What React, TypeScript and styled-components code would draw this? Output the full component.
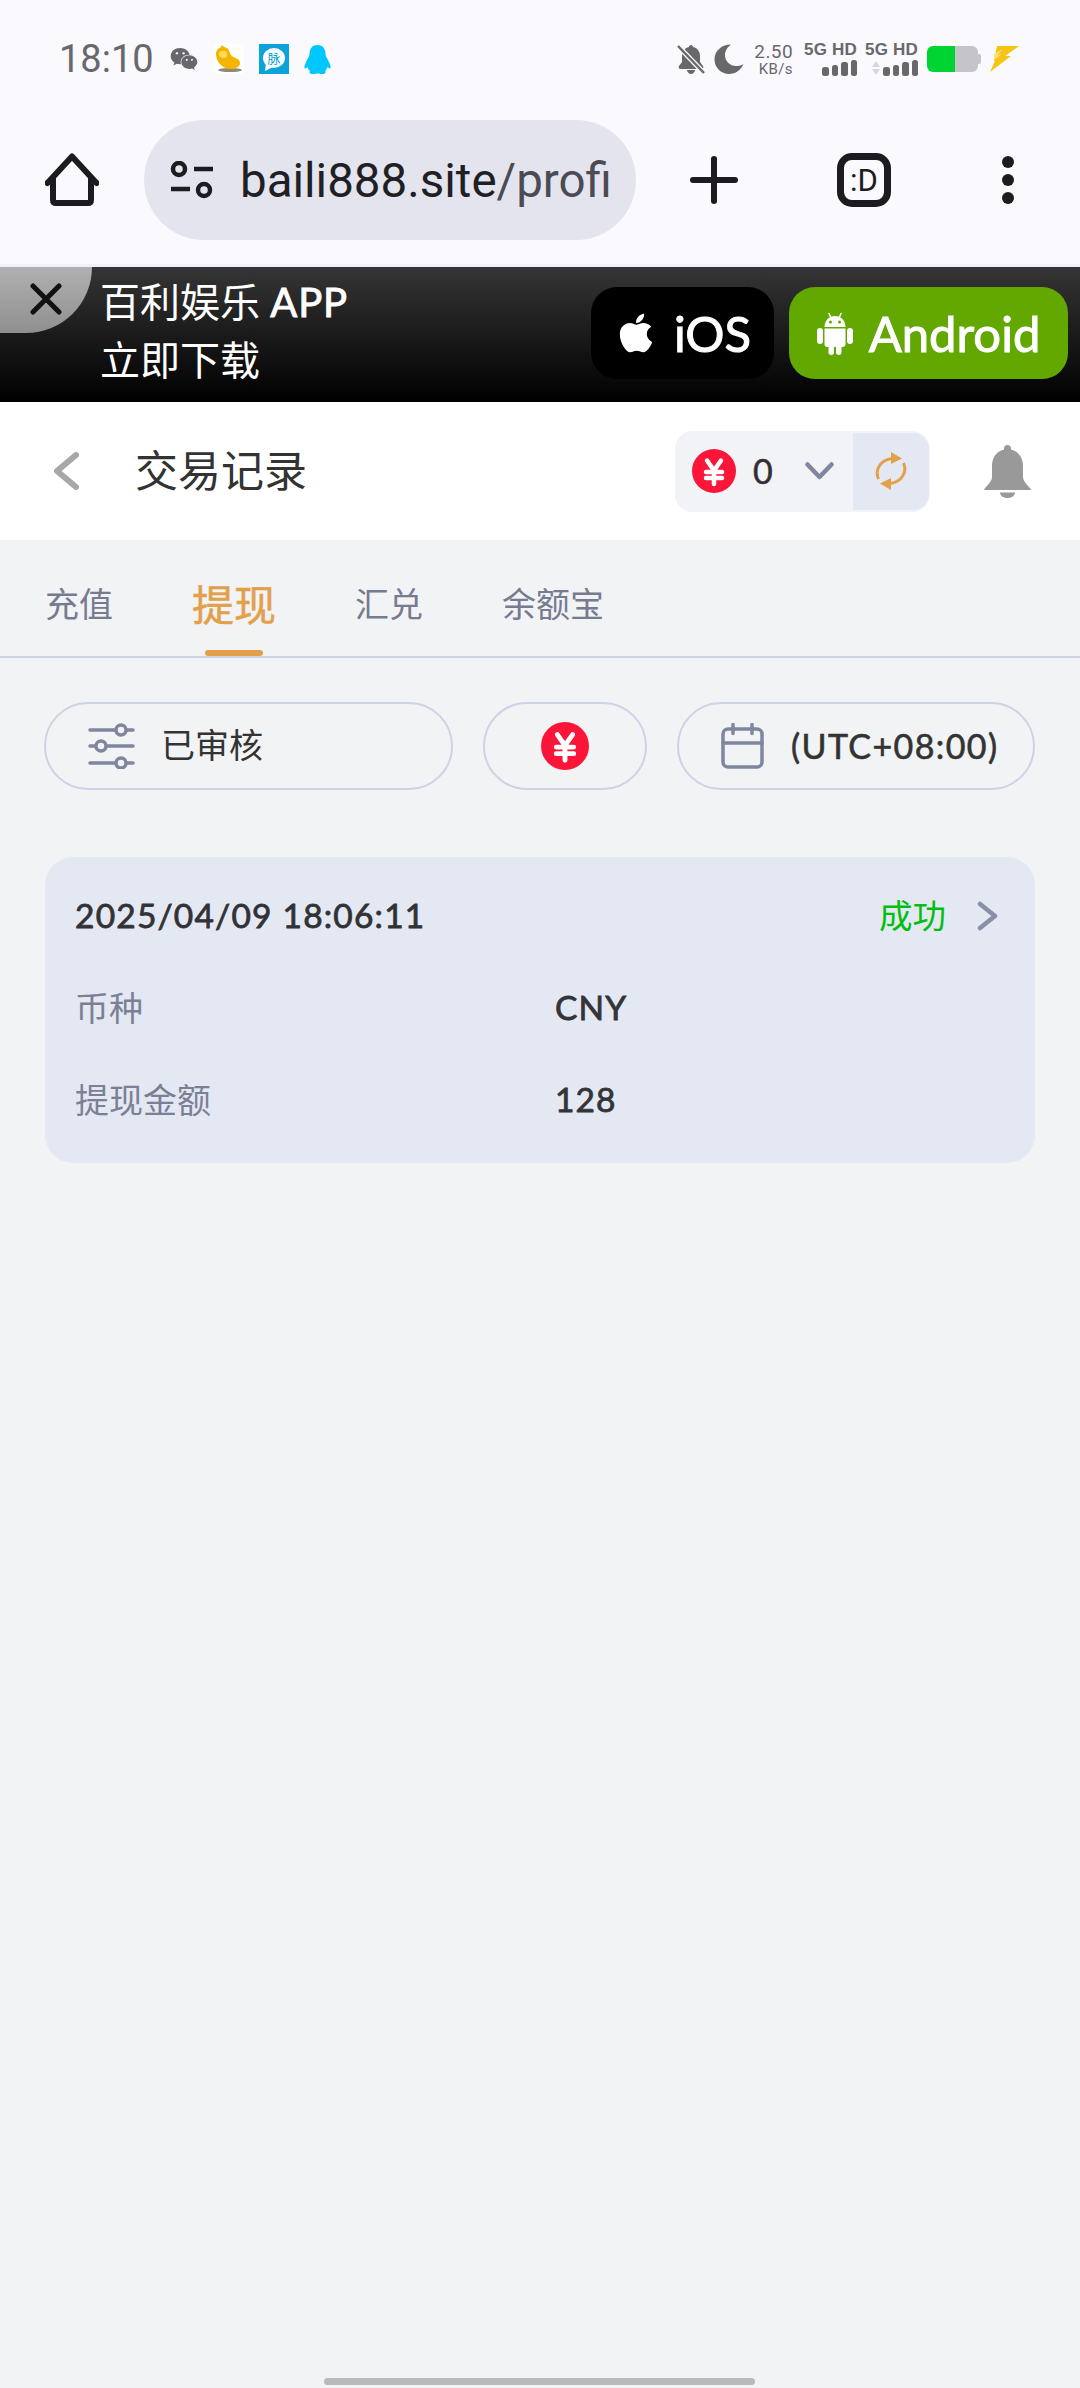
import React from "react";
import styled, { createGlobalStyle } from "styled-components";
import { FaApple, FaWeixin } from "react-icons/fa";

const SANS = `"Lato", "Noto Sans CJK SC", sans-serif`;
const CJK = `"Noto Sans CJK SC", "Noto Sans", sans-serif`;
const PAGE_BG = "#f2f3f5";

const Global = createGlobalStyle`
  html, body { margin: 0; padding: 0; background: ${PAGE_BG}; }
  * { box-sizing: border-box; }
`;

const Page = styled.div`
  width: 1080px;
  height: 2388px;
  display: flex;
  flex-direction: column;
  overflow: hidden;
  background: ${PAGE_BG};
  font-family: ${SANS};
`;

/* Phone status bar and browser toolbar */
const Chrome = styled.header`
  height: 267px;
  flex: none;
  background: #f9f9fe;
  border-bottom: 3px solid #f1f0f8;
`;

const StatusBar = styled.div`
  height: 120px;
  padding: 0 0 2px 59px;
  display: flex;
  align-items: center;
  color: #68686c;
`;

const Clock = styled.span`
  font: 400 38px/1 Roboto, sans-serif;
  color: #68686c;
  width: 111px;
`;

const NotifyIcons = styled.div`
  display: flex;
  align-items: center;
  gap: 15px;
  color: #68686c;
`;

const SystemIcons = styled.div`
  margin-left: auto;
  padding-right: 61px;
  display: flex;
  align-items: center;
  color: #68686c;
`;

const Speed = styled.div`
  width: 39px;
  margin: 0 15px 0 10px;
  display: flex;
  flex-direction: column;
  align-items: flex-end;
  font-family: Roboto, sans-serif;
  line-height: 1;
`;

const SpeedValue = styled.span`
  font-size: 19px;
  letter-spacing: 0.4px;
`;

const SpeedUnit = styled.span`
  font-size: 15px;
  margin-top: 1px;
  letter-spacing: 0.4px;
`;

const Network = styled.div`
  width: 49px;
  margin-right: 12px;
  display: flex;
  flex-direction: column;
  align-items: flex-end;
`;

const NetworkLabel = styled.span`
  font: 700 17px/16px "Liberation Sans Narrow", "Liberation Sans", sans-serif;
  white-space: nowrap;
  letter-spacing: 0.2px;
`;

const Bars = styled.div`
  margin-top: 2px;
  height: 16px;
  display: flex;
  align-items: flex-end;
  gap: 3px;
`;

const Bar = styled.i<{ $h: number }>`
  display: block;
  width: 6.5px;
  height: ${(p) => p.$h}px;
  background: #68686c;
  border-radius: 2.5px;
`;

const Battery = styled.div`
  width: 54px;
  height: 26px;
  margin-left: -3px;
  display: flex;
  align-items: center;
`;

const BatteryFill = styled.div`
  width: 28px;
  height: 26px;
  background: #00d433;
  border-radius: 6px 0 0 6px;
`;

const BatteryRest = styled.div`
  width: 23px;
  height: 26px;
  background: #c5c4ca;
  border-radius: 0 6px 6px 0;
`;

const BatteryNub = styled.div`
  width: 3px;
  height: 10px;
  background: #c5c4ca;
  border-radius: 0 2px 2px 0;
`;

const Toolbar = styled.div`
  height: 120px;
  padding-left: 45px;
  display: flex;
  align-items: center;
`;

const AddressBar = styled.div`
  width: 492px;
  height: 120px;
  margin: 0 54px 0 45px;
  padding-left: 26px;
  display: flex;
  align-items: center;
  gap: 26px;
  background: #e3e4ee;
  border-radius: 60px;
  overflow: hidden;
`;

const Url = styled.span`
  padding-top: 4px;
  font: 400 47.5px/1 Roboto, sans-serif;
  color: #1f1f25;
  white-space: nowrap;
`;

const UrlPath = styled.span`
  color: #4b4b54;
`;

const TabCounter = styled.div`
  width: 54px;
  height: 54px;
  margin-left: 99px;
  border: 7px solid #1b1b20;
  border-radius: 15px;
  display: flex;
  align-items: center;
  justify-content: center;
  font: 400 31px/1 Roboto, sans-serif;
  color: #1b1b20;
`;

const MenuDots = styled.div`
  margin-left: 111px;
  display: flex;
  flex-direction: column;
  gap: 6px;
`;

const Dot = styled.i`
  display: block;
  width: 12px;
  height: 12px;
  background: #1b1b20;
  border-radius: 50%;
`;

/* App download banner */
const Banner = styled.section`
  position: relative;
  height: 135px;
  flex: none;
  padding: 20px 12px 0 100px;
  display: flex;
  background: linear-gradient(#353535, #000);
`;

const CloseCorner = styled.div`
  position: absolute;
  left: 0;
  top: 0;
  width: 92px;
  height: 66px;
  background: linear-gradient(#b0b0b0, #8f8f8f);
  border-bottom-right-radius: 70px;
`;

const CloseGlyph = styled.svg`
  position: absolute;
  left: 30px;
  top: 16px;
`;

const Pitch = styled.div`
  margin-top: -20px;
  padding-top: 6px;
  font: 400 40px/58px ${SANS};
  color: #fff;
`;

const PitchLatin = styled.span`
  -webkit-text-stroke: 0.9px #fff;
  letter-spacing: 0.8px;
`;

const Downloads = styled.div`
  margin-left: auto;
  display: flex;
  gap: 15px;
`;

const StoreButton = styled.div<{ $bg: string; $w: number }>`
  width: ${(p) => p.$w}px;
  height: 92px;
  background: ${(p) => p.$bg};
  border-radius: 26px;
  display: flex;
  align-items: center;
  justify-content: center;
  gap: 16px;
  font: 400 49px/1 "Lato", sans-serif;
  -webkit-text-stroke: 1px #fff;
  color: #fff;
`;

/* Page header */
const Header = styled.div`
  height: 138px;
  flex: none;
  padding: 0 49px 0 53px;
  display: flex;
  align-items: center;
  background: #fff;
`;

const Title = styled.h1`
  margin: 0 0 0 56px;
  padding-bottom: 5px;
  font: 400 43px/1 ${CJK};
  color: #333;
`;

const Balance = styled.div`
  margin-left: auto;
  width: 255px;
  height: 81px;
  padding: 2px 1px 2px 17px;
  display: flex;
  align-items: center;
  background: #f2f3f6;
  border-radius: 18px;
`;

const BalanceAmount = styled.span`
  margin-left: 17px;
  width: 52px;
  font: 400 34px/1 "Lato", sans-serif;
  -webkit-text-stroke: 0.5px #2f3034;
  color: #2f3034;
`;

const Refresh = styled.div`
  margin-left: auto;
  width: 76px;
  height: 77px;
  display: flex;
  align-items: center;
  justify-content: center;
  background: #e4e8f3;
  border-radius: 0 16px 16px 0;
`;

const BellSlot = styled.div`
  margin-left: 54px;
  display: flex;
`;

/* Record type tabs */
const Tabs = styled.nav`
  height: 118px;
  flex: none;
  padding: 10px 0 0 45px;
  display: flex;
  align-items: center;
  gap: 79px;
  border-bottom: 2px solid #cdd2e4;
`;

const Tab = styled.div<{ $active?: boolean }>`
  position: relative;
  font: 400 ${(p) => (p.$active ? 42 : 34)}px/1 ${CJK};
  color: ${(p) => (p.$active ? "#e2a04b" : "#767b90")};
  -webkit-text-stroke: ${(p) => (p.$active ? "0.5px #e2a04b" : "0")};
`;

const TabMark = styled.i`
  position: absolute;
  left: 13px;
  top: 68px;
  display: block;
  width: 58px;
  height: 6px;
  background: #e2a04b;
  border-radius: 3px;
`;

/* Filter pills */
const Filters = styled.div`
  margin-top: 44px;
  padding-left: 44px;
  display: flex;
  gap: 30px;
`;

const Pill = styled.div<{ $w: number; $center?: boolean }>`
  width: ${(p) => p.$w}px;
  height: 88px;
  padding-left: ${(p) => (p.$center ? 0 : 42)}px;
  display: flex;
  align-items: center;
  justify-content: ${(p) => (p.$center ? "center" : "flex-start")};
  border: 2px solid #cdd2e4;
  border-radius: 44px;
`;

const PillLabel = styled.span`
  margin-left: 26px;
  padding-bottom: 4px;
  font: 400 34px/1 ${CJK};
  color: #333;
`;

const PillZone = styled.span`
  margin-left: 27px;
  font: 400 34px/1 "Lato", sans-serif;
  -webkit-text-stroke: 0.6px #333;
  color: #333;
  letter-spacing: 1.4px;
  white-space: nowrap;
`;

/* Transaction card */
const Card = styled.article`
  margin: 67px 0 0 45px;
  width: 990px;
  height: 306px;
  padding: 13px 30px 17px;
  background: #e4e8f3;
  border-radius: 28px;
`;

const CardRow = styled.div`
  height: 92px;
  display: flex;
  align-items: center;
`;

const DateText = styled.span`
  font: 400 33.5px/1 "Lato", sans-serif;
  -webkit-text-stroke: 0.8px #313236;
  color: #313236;
  letter-spacing: 1.2px;
`;

const Status = styled.span`
  margin-left: auto;
  padding-bottom: 4px;
  font: 400 33.5px/1 ${CJK};
  color: #00bf0f;
`;

const ChevronSlot = styled.div`
  margin: 0 7px 0 31px;
  display: flex;
`;

const FieldName = styled.span`
  width: 480px;
  padding-bottom: 2px;
  font: 400 34px/1 ${CJK};
  color: #7b8095;
`;

const FieldValue = styled.span`
  font: 400 33.5px/1 "Lato", sans-serif;
  -webkit-text-stroke: 0.8px #333438;
  color: #333438;
  letter-spacing: 1.1px;
`;

const HomeIndicator = styled.div`
  width: 431px;
  height: 7px;
  margin: auto auto 3px 324px;
  background: #b8b9bb;
  border-radius: 4px;
`;

const YuanCoin = ({ size }: { size: number }) => (
  <svg width={size} height={size} viewBox="0 0 44 44" style={{ flex: "none" }}>
    <circle cx="22" cy="22" r="22" fill="#fb1539" />
    <path
      d="M15 11.5 22 21.5l7-10M14 23h16M14 29h16M22 21.500V35"
      fill="none"
      stroke="#fff"
      strokeWidth="4.500"
      strokeLinecap="round"
    />
  </svg>
);

const AndroidRobot = () => (
  <svg width="36" height="43" viewBox="0 0 36 43" style={{ flex: "none" }}>
    <path d="M12 1.500 14 6M24 1.500 22 6" stroke="#fff" strokeWidth="1.500" strokeLinecap="round" />
    <path d="M7.500 15C7.500 8.500 12 4 18 4s10.500 4.500 10.500 11Z" fill="#fff" />
    <circle cx="13.500" cy="10" r="1.500" fill="#62a800" />
    <circle cx="22.500" cy="10" r="1.500" fill="#62a800" />
    <path d="M7.500 16.500h21V32a3 3 0 0 1-3 3h-15a3 3 0 0 1-3-3Z" fill="#fff" />
    <rect x="0" y="16" width="6" height="16" rx="3" fill="#fff" />
    <rect x="30" y="16" width="6" height="16" rx="3" fill="#fff" />
    <rect x="11.500" y="32" width="5.500" height="11" rx="2.750" fill="#fff" />
    <rect x="19" y="32" width="5.500" height="11" rx="2.750" fill="#fff" />
  </svg>
);

export default function App() {
  return (
    <Page>
      <Global />
      <Chrome>
        <StatusBar>
          <Clock>18:10</Clock>
          <NotifyIcons>
            <FaWeixin size={28} />
            <svg width="31" height="30" viewBox="0 0 31 30">
              <rect width="31" height="30" rx="4" fill="#fffffa" />
              <ellipse cx="17" cy="26" rx="12" ry="2" fill="#8d8a78" />
              <path
                d="M3 10c0-3 2-6 4-6l2-3 2 2 3 1c3 2 2 6 5 8s8 3 8 7c0 4-5 6-10 6C10 25 3 18 3 10Z"
                fill="#f5b400"
              />
              <path d="M6 9c2-3 7-3 8 0 1 3-1 5-3 5-3 0-6-2-5-5Z" fill="#ffdc55" />
            </svg>
            <svg width="30" height="30" viewBox="0 0 30 30">
              <rect width="30" height="30" fill="#0ba3d9" />
              <ellipse cx="15" cy="14" rx="11" ry="10" fill="#fff" />
              <path d="M7 19 6 27l8-4Z" fill="#fff" />
              <text x="15" y="19" fontSize="13" textAnchor="middle" fill="#0ba3d9" fontFamily={CJK}>
                脉
              </text>
            </svg>
            <svg width="27" height="29" viewBox="0 0 27 29">
              <path
                d="M13.500 0C8 0 5.500 4 5.500 9c0 2-1 3-2.500 6S0 21 .5 23c.5 1 2 0 3-1 .5 2 1.500 3 2.500 4-1 1-1 3 3 3 2 0 3-.5 4.500-.5S16 29 18 29c4 0 4-2 3-3 1-1 2-2 2.500-4 1 1 2.500 2 3 1 .5-2-1-5-2.500-8S21.500 11 21.500 9c0-5-2.500-9-8-9Z"
                fill="#00c8ff"
              />
            </svg>
          </NotifyIcons>
          <SystemIcons>
            <svg width="28" height="30" viewBox="0 0 28 30">
              <path
                d="M14 1c-1.500 0-2 1-2 2-5 1-7 5-7 9v6l-3 4c-1 2 0 3 2 3h20c2 0 3-1 2-3l-3-4v-6c0-4-2-8-7-9 0-1-.500-2-2-2Z"
                fill="currentColor"
              />
              <path d="M10 26h8c0 2-2 4-4 4s-4-2-4-4Z" fill="currentColor" />
              <path d="M1 2 27 29" stroke="#f9f9fe" strokeWidth="5" />
              <path d="M1 2 27 29" stroke="currentColor" strokeWidth="2.500" />
            </svg>
            <svg width="30" height="30" viewBox="0 0 30 30" style={{ marginLeft: 9 }}>
              <path
                d="M17 .5C8 .5.5 6.500.5 15.500 .5 23.500 7 30 15 30c6.500 0 12-4 14.500-10-2 1.500-4.500 2-7 2C15.500 22 11 17 11 11c0-4 2.500-8 6-10.500Z"
                fill="currentColor"
              />
            </svg>
            <Speed>
              <SpeedValue>2.50</SpeedValue>
              <SpeedUnit>KB/s</SpeedUnit>
            </Speed>
            <Network>
              <NetworkLabel>5G HD</NetworkLabel>
              <Bars>
                <Bar $h={9} />
                <Bar $h={11} />
                <Bar $h={14} />
                <Bar $h={16} />
              </Bars>
            </Network>
            <Network>
              <NetworkLabel>5G HD</NetworkLabel>
              <Bars>
                <svg width="10" height="16" viewBox="0 0 10 16" style={{ marginRight: -1 }}>
                  <path d="M5 1 9 7H1Z M5 15 1 9h8Z" fill="#d5d5da" />
                </svg>
                <Bar $h={9} />
                <Bar $h={11} />
                <Bar $h={14} />
                <Bar $h={16} />
              </Bars>
            </Network>
            <Battery>
              <BatteryFill />
              <BatteryRest />
              <BatteryNub />
            </Battery>
            <svg width="29" height="26" viewBox="0 0 29 26" style={{ marginLeft: 9 }}>
              <path d="M7 0h22L15 10h6L0 26l5-11 3-1-3 1h3l-4 0Z" fill="#f6c512" />
              <path d="M4 8 13 3 7 9l5-1-8 6Z" fill="#fbe27a" />
            </svg>
          </SystemIcons>
        </StatusBar>
        <Toolbar>
          <svg width="54" height="54" viewBox="0 0 54 54" style={{ flex: "none" }}>
            <path
              d="M2.500 30 27 3.500 51.500 30M8 26v21c0 2 1 3 3 3h32c2 0 3-1 3-3V26"
              fill="none"
              stroke="#1b1b20"
              strokeWidth="6"
              strokeLinecap="round"
              strokeLinejoin="round"
            />
          </svg>
          <AddressBar>
            <svg width="44" height="38" viewBox="0 0 44 38" style={{ flex: "none" }}>
              <g fill="none" stroke="#1b1b20" strokeWidth="4.500">
                <circle cx="9" cy="8" r="6" />
                <circle cx="34" cy="29" r="6" />
                <path d="M24 8h19M1 28h19" />
              </g>
            </svg>
            <Url>
              baili888.site<UrlPath>/profi</UrlPath>
            </Url>
          </AddressBar>
          <svg width="48" height="48" viewBox="0 0 48 48" style={{ flex: "none" }}>
            <path
              d="M24 3v42M3 24h42"
              fill="none"
              stroke="#1b1b20"
              strokeWidth="6"
              strokeLinecap="round"
            />
          </svg>
          <TabCounter>:D</TabCounter>
          <MenuDots>
            <Dot />
            <Dot />
            <Dot />
          </MenuDots>
        </Toolbar>
      </Chrome>

      <Banner>
        <CloseCorner>
          <CloseGlyph width="32" height="32" viewBox="0 0 32 32">
            <path
              d="M3 3 29 29M29 3 3 29"
              stroke="#111"
              strokeWidth="5"
              strokeLinecap="round"
              fill="none"
            />
          </CloseGlyph>
        </CloseCorner>
        <Pitch>
          百利娱乐 <PitchLatin>APP</PitchLatin>
          <br />
          立即下载
        </Pitch>
        <Downloads>
          <StoreButton $bg="#000" $w={183}>
            <FaApple size={44} />
            iOS
          </StoreButton>
          <StoreButton $bg="#62a800" $w={279}>
            <AndroidRobot />
            Android
          </StoreButton>
        </Downloads>
      </Banner>

      <Header>
        <svg width="26" height="38" viewBox="0 0 26 38" style={{ flex: "none" }}>
          <path
            d="M23 3 4 19l19 16"
            fill="none"
            stroke="#a8a8a8"
            strokeWidth="6"
            strokeLinecap="round"
            strokeLinejoin="round"
          />
        </svg>
        <Title>交易记录</Title>
        <Balance>
          <YuanCoin size={44} />
          <BalanceAmount>0</BalanceAmount>
          <svg width="29" height="18" viewBox="0 0 29 18">
            <path
              d="M2.500 2.500 14.500 15 26.500 2.500"
              fill="none"
              stroke="#7f869e"
              strokeWidth="4.500"
              strokeLinecap="round"
              strokeLinejoin="round"
            />
          </svg>
          <Refresh>
            <svg width="32" height="38" viewBox="0 0 32 38">
              <g fill="none" stroke="#e2a04b" strokeWidth="3">
                <path d="M3.500 27C-.5 18 5 8 17 6.500" />
                <path d="M28.500 11c4 9-1.500 19-13.500 20.500" />
              </g>
              <path d="M16 0l11 6.500-11 5.500Z M16 26l-11 5.500L16 38Z" fill="#e2a04b" />
            </svg>
          </Refresh>
        </Balance>
        <BellSlot>
          <svg width="47" height="53" viewBox="0 0 47 53">
            <path
              d="M23.500 0c-2.500 0-4 2-3.500 4.500C12 6.500 8 13 8 21v11c0 3-2 5.500-5 9-2 2-3 3-3 4h47c0-1-1-2-3-4-3-3.500-5-6-5-9V21c0-8-4-14.500-12-16.500C27.500 2 26 0 23.500 0Z"
              fill="#999"
            />
            <path d="M16 47.500h15c0 3-3 5.500-7.500 5.500S16 50.500 16 47.500Z" fill="#999" />
          </svg>
        </BellSlot>
      </Header>

      <Tabs>
        <Tab>充值</Tab>
        <Tab $active>
          提现
          <TabMark />
        </Tab>
        <Tab>汇兑</Tab>
        <Tab>余额宝</Tab>
      </Tabs>

      <Filters>
        <Pill $w={409}>
          <svg width="47" height="46" viewBox="0 0 47 46" style={{ flex: "none" }}>
            <g fill={PAGE_BG} stroke="#7f869e" strokeWidth="3.500" strokeLinecap="round">
              <path d="M2 7h43M2 23h43M2 40h43" />
              <circle cx="33" cy="7" r="5" />
              <circle cx="13" cy="23" r="5" />
              <circle cx="33" cy="40" r="5" />
            </g>
          </svg>
          <PillLabel>已审核</PillLabel>
        </Pill>
        <Pill $w={164} $center>
          <YuanCoin size={48} />
        </Pill>
        <Pill $w={358}>
          <svg width="43" height="46" viewBox="0 0 43 46" style={{ flex: "none" }}>
            <g fill="none" stroke="#7f869e" strokeWidth="3.500" strokeLinecap="round">
              <rect x="2" y="6" width="39" height="38" rx="5" />
              <path d="M2 20h39M12 1.500v9M31 1.500v9" />
            </g>
          </svg>
          <PillZone>(UTC+08:00)</PillZone>
        </Pill>
      </Filters>

      <Card>
        <CardRow>
          <DateText>2025/04/09 18:06:11</DateText>
          <Status>成功</Status>
          <ChevronSlot>
            <svg width="21" height="30" viewBox="0 0 21 30">
              <path
                d="M3 3 18 15 3 27"
                fill="none"
                stroke="#8a8fa8"
                strokeWidth="4.500"
                strokeLinecap="round"
                strokeLinejoin="round"
              />
            </svg>
          </ChevronSlot>
        </CardRow>
        <CardRow>
          <FieldName>币种</FieldName>
          <FieldValue>CNY</FieldValue>
        </CardRow>
        <CardRow>
          <FieldName>提现金额</FieldName>
          <FieldValue>128</FieldValue>
        </CardRow>
      </Card>

      <HomeIndicator />
    </Page>
  );
}
